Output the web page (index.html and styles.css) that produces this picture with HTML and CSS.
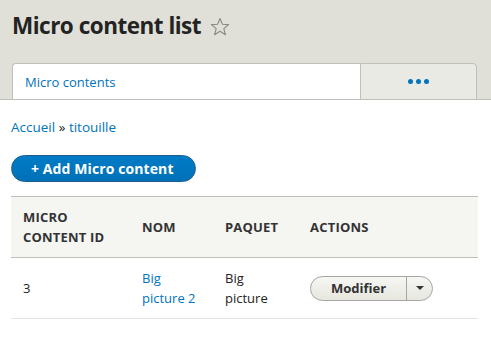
FILE: index.html
```html
<!DOCTYPE html>
<html lang="fr">
<head>
  <meta charset="UTF-8" />
  <title>Micro content list</title>
  <link rel="stylesheet" href="styles.css">
</head>
<body>

  <header class="page-header">
    <h1 class="page-title">
      Micro content list
      <svg class="star" width="20" height="20" viewBox="0 0 20 20">
        <path d="M10 1.5 L12.4 7.3 L18.6 7.6 L13.8 11.6 L15.4 17.7 L10 14.3 L4.6 17.7 L6.2 11.6 L1.4 7.6 L7.6 7.3 Z" fill="none" stroke="#8a8a85" stroke-width="1.1" stroke-linejoin="round"/>
      </svg>
    </h1>
    <nav class="tabs">
      <a href="#" class="tab tab-active">Micro contents</a>
      <a href="#" class="tab tab-more"><span class="dot"></span><span class="dot"></span><span class="dot"></span></a>
    </nav>
  </header>

  <main class="content">
    <div class="breadcrumb">
      <a href="#">Accueil</a> » <a href="#">titouille</a>
    </div>

    <a href="#" class="button-action">+ Add Micro content</a>

    <table class="list">
      <thead>
        <tr>
          <th class="col-id">Micro<br>content ID</th>
          <th class="col-name">Nom</th>
          <th class="col-pack">Paquet</th>
          <th class="col-actions">Actions</th>
        </tr>
      </thead>
      <tbody>
        <tr>
          <td>3</td>
          <td><a href="#">Big<br>picture 2</a></td>
          <td>Big<br>picture</td>
          <td>
            <div class="dropbutton">
              <a href="#" class="drop-main">Modifier</a>
              <span class="drop-toggle"><span class="arrow"></span></span>
            </div>
          </td>
        </tr>
      </tbody>
    </table>
  </main>

</body>
</html>
```

FILE: styles.css
```css
body {
  margin: 0;
  font-family: "Open Sans", "DejaVu Sans", sans-serif;
  font-size: 13px;
  color: #222;
  background: #fff;
}

a {
  color: #0074bd;
  text-decoration: none;
}

.page-header {
  background: #e0e0d8;
  border-bottom: 1px solid #bfbfba;
  padding: 14px 14px 0 12px;
}

.page-title {
  margin: 0;
  font-size: 22.5px;
  font-weight: 700;
  color: #232323;
  line-height: 24px;
  letter-spacing: -0.5px;
  display: flex;
  align-items: center;
  gap: 9px;
}

.star {
  margin-top: 1px;
}

.tabs {
  display: flex;
  margin-top: 25px;
  margin-bottom: -1px;
}

.tab {
  height: 35px;
  display: flex;
  align-items: center;
  border: 1px solid #bfbfba;
  border-bottom: none;
}

.tab-active {
  flex: 0 0 348px;
  box-sizing: border-box;
  background: #fff;
  border-right: none;
  border-top-left-radius: 4px;
  padding-left: 12px;
  height: 36px;
  font-size: 13px;
}

.tab-more {
  flex: 1;
  background: #eaeae5;
  border-top-right-radius: 4px;
  border-bottom: 1px solid #bfbfba;
  justify-content: center;
  gap: 3px;
}

.dot {
  width: 5px;
  height: 5px;
  border-radius: 50%;
  background: #0074bd;
}

.content {
  padding: 0 13px 0 11px;
}

.breadcrumb {
  margin-top: 17px;
  line-height: 20px;
  font-size: 13.5px;
}

.button-action {
  display: inline-block;
  margin-top: 18px;
  height: 27px;
  line-height: 25px;
  padding: 0 21px 0 19px;
  border-radius: 14px;
  background: #0074bd;
  background: linear-gradient(#007bc6, #0071b8);
  border: 1px solid #1e5c90;
  box-sizing: border-box;
  color: #fff;
  font-weight: 700;
  font-size: 14px;
  letter-spacing: 0.1px;
}

.list {
  width: 100%;
  margin-top: 14px;
  border-collapse: collapse;
  table-layout: fixed;
}

.list thead tr {
  background: #f5f5f2;
  border-top: 1px solid #bfbfba;
  border-bottom: 1px solid #bfbfba;
}

.list th,
.list td {
  text-align: left;
  padding: 10px 12px;
  line-height: 20px;
  vertical-align: middle;
}

.list th {
  font-size: 13px;
  font-weight: 700;
  text-transform: uppercase;
  color: #333;
  letter-spacing: 0.2px;
}

.list tbody tr {
  border-bottom: 1px solid #e6e4df;
}

.col-id { width: 95px; }
.col-name { width: 59px; }
.col-pack { width: 61px; }

.dropbutton {
  display: inline-flex;
  height: 25px;
  box-sizing: border-box;
  border: 1px solid #a6a6a6;
  border-radius: 13px;
  background: linear-gradient(#f6f6f3, #e7e7df);
  overflow: hidden;
}

.drop-main {
  width: 95px;
  display: flex;
  align-items: center;
  justify-content: center;
  font-weight: 700;
  color: #333;
  border-right: 1px solid #a6a6a6;
}

.drop-toggle {
  width: 25px;
  display: flex;
  align-items: center;
  justify-content: center;
}

.arrow {
  width: 0;
  height: 0;
  border-left: 4px solid transparent;
  border-right: 4px solid transparent;
  border-top: 4px solid #333;
}
```
